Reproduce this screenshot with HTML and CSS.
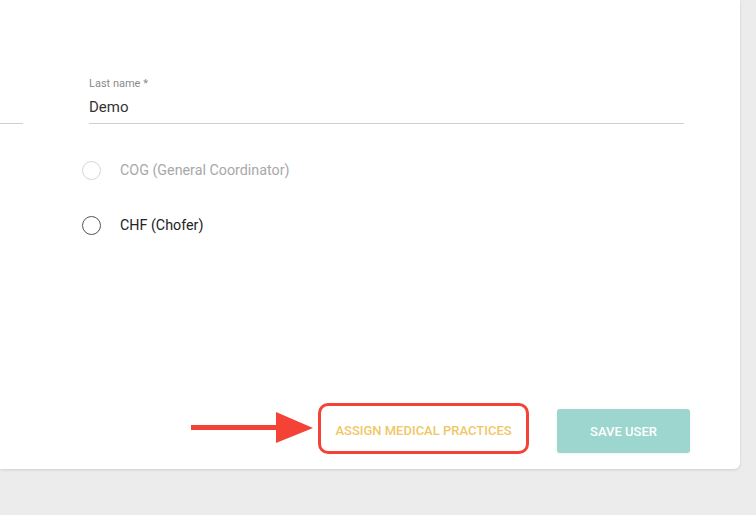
FILE: index.html
```html
<!DOCTYPE html>
<html>
<head>
<meta charset="utf-8">
<link rel="stylesheet" href="styles.css">
</head>
<body>
<div class="card">
  <div class="fields">
    <div class="field field-cut"><div class="line"></div></div>
    <div class="field">
      <label class="label">Last name *</label>
      <div class="value">Demo</div>
      <div class="line"></div>
    </div>
  </div>
  <div class="radios">
    <div class="radio disabled"><span class="circle"></span><span>COG (General Coordinator)</span></div>
    <div class="radio"><span class="circle"></span><span>CHF (Chofer)</span></div>
  </div>
  <div class="actions">
    <svg class="arrow" width="122" height="31" viewBox="0 0 122 31">
      <rect x="0" y="13" width="88" height="5" fill="#f44336"/>
      <polygon points="85,0 122,16 85,31" fill="#f44336"/>
    </svg>
    <div class="highlight">
      <button class="btn-text">ASSIGN MEDICAL PRACTICES</button>
    </div>
    <button class="btn-save">SAVE USER</button>
  </div>
</div>
</body>
</html>
```
FILE: styles.css
```css
html, body {
  margin: 0;
  padding: 0;
}
body {
  background: #ececec;
  font-family: Roboto, "Liberation Sans", sans-serif;
  width: 756px;
  height: 515px;
  overflow: hidden;
}
.card {
  width: 740px;
  height: 469px;
  background: #fff;
  border-bottom-right-radius: 6px;
  box-shadow: 0 1px 3px rgba(0,0,0,0.12);
  box-sizing: border-box;
  padding-top: 76px;
  display: flex;
  flex-direction: column;
}
.fields {
  display: grid;
  grid-template-columns: 23px 595px;
  column-gap: 66px;
  align-items: end;
}
.field {
  display: flex;
  flex-direction: column;
}
.label {
  font-size: 11px;
  color: #8a8a8a;
  line-height: 16px;
}
.value {
  font-size: 15px;
  color: #333;
  line-height: 20px;
  margin-top: 5px;
  padding-bottom: 6px;
}
.line {
  height: 1px;
  background: #cfcfcf;
}
.radios {
  margin-left: 82px;
  margin-top: 36px;
  display: flex;
  flex-direction: column;
  gap: 35px;
}
.radio {
  display: flex;
  align-items: center;
  gap: 19px;
  font-size: 14.3px;
  color: #222;
  height: 20px;
}
.radio .circle {
  width: 17px;
  height: 17px;
  border: 1.5px solid #555;
  border-radius: 50%;
  flex: none;
}
.radio.disabled {
  color: #a8a8a8;
}
.radio.disabled .circle {
  border-color: #d6d6d6;
}
.actions {
  margin-top: auto;
  margin-bottom: 15px;
  padding-right: 50px;
  display: flex;
  justify-content: flex-end;
  align-items: flex-start;
}
.arrow {
  margin-top: 9px;
  margin-right: 5px;
  flex: none;
}
.highlight {
  border: 3.5px solid #f44336;
  border-radius: 10px;
  width: 205px;
  height: 45px;
  display: flex;
  align-items: center;
  justify-content: center;
  margin-right: 28px;
}
.btn-text {
  background: none;
  border: none;
  font-family: Roboto, "Liberation Sans", sans-serif;
  font-weight: 500;
  font-size: 13px;
  color: #efc766;
  padding: 0;
  margin-top: 3px;
}
.btn-save {
  margin-top: 6px;
  width: 133px;
  height: 44px;
  background: #9dd6ce;
  border: none;
  border-radius: 3px;
  color: #fff;
  font-family: Roboto, "Liberation Sans", sans-serif;
  font-weight: 500;
  font-size: 13px;
  box-shadow: 0 1px 3px rgba(0,0,0,0.06);
}
```
